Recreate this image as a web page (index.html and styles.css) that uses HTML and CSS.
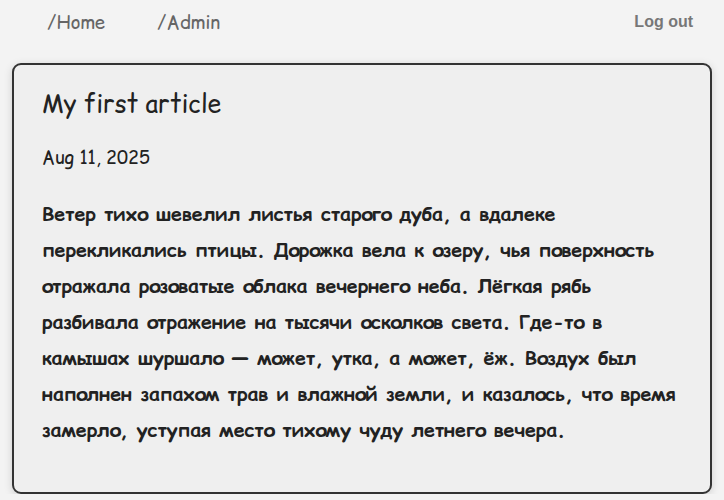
FILE: index.html
```html
<!DOCTYPE html>
<html lang="ru">
<head>
<meta charset="utf-8">
<title>My first article</title>
<link rel="stylesheet" href="styles.css">
</head>
<body>
<nav class="nav">
  <div class="nav-links">
    <a class="nav-link" href="#">/Home</a>
    <a class="nav-link" href="#">/Admin</a>
  </div>
  <button class="logout">Log out</button>
</nav>
<article class="card">
  <h1 class="title">My first article</h1>
  <p class="date">Aug 11, 2025</p>
  <p class="body">Ветер тихо шевелил листья старого дуба, а вдалеке перекликались птицы. Дорожка вела к озеру, чья поверхность отражала розоватые облака вечернего неба. Лёгкая рябь разбивала отражение на тысячи осколков света. Где-то в камышах шуршало — может, утка, а может, ёж. Воздух был наполнен запахом трав и влажной земли, и казалось, что время замерло, уступая место тихому чуду летнего вечера.</p>
</article>
</body>
</html>
```

FILE: styles.css
```css
html, body {
  margin: 0;
  padding: 0;
  background: #f3f3f3;
}
body {
  font-family: "Comic Relief", "Comic Sans MS", cursive;
  color: #222;
  padding: 0 12px;
}
.nav {
  display: flex;
  justify-content: space-between;
  align-items: center;
  height: 44px;
  padding: 0 19px 0 35px;
  margin-bottom: 19px;
}
.nav-links {
  display: flex;
  gap: 52px;
}
.nav-link {
  color: #666;
  text-decoration: none;
  font-size: 18.5px;
}
.logout {
  background: none;
  border: none;
  padding: 0;
  font-family: "Liberation Sans", Arial, sans-serif;
  font-weight: bold;
  font-size: 16px;
  color: #777;
}
.card {
  background: #efefef;
  border: 2px solid #333;
  border-radius: 9px;
  box-shadow: 0 2px 8px rgba(0,0,0,0.15);
  padding: 21px 28px 44px;
}
.title {
  margin: 0 0 26px;
  font-size: 24.5px;
  line-height: 34px;
  font-weight: normal;
}
.date {
  margin: 0 0 26px;
  font-size: 18px;
  line-height: 24px;
}
.body {
  margin: 0;
  font-size: 19.5px;
  font-weight: bold;
  line-height: 36px;
}
```
